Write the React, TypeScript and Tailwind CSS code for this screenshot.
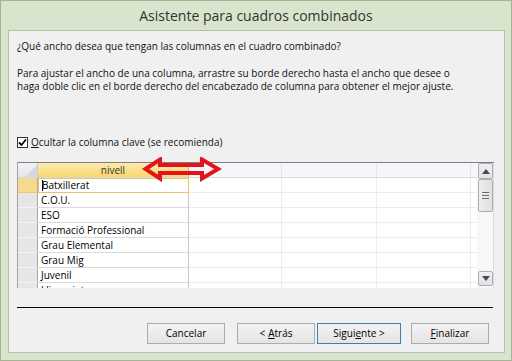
import React from "react";

const rows = [
  "Batxillerat",
  "C.O.U.",
  "ESO",
  "Formació Professional",
  "Grau Elemental",
  "Grau Mig",
  "Juvenil",
  "Llicenciatura",
];

function WizardButton({ children, focused }: { children: React.ReactNode; focused?: boolean }) {
  return (
    <button
      className={`h-[21px] flex items-center justify-center border bg-gradient-to-b from-[#f3f3f3] to-[#e4e4e4] text-[10px] text-black ${
        focused ? "w-[84px] border-[#3c7fb1]" : "w-[78px] border-[#acacac]"
      }`}
    >
      {children}
    </button>
  );
}

function ScrollButton({ up }: { up?: boolean }) {
  return (
    <div className="h-[15px] w-[15px] flex items-center justify-center border border-[#adadad] rounded-[2px] bg-gradient-to-b from-[#f0f0f0] to-[#e2e2e2]">
      <svg width="8" height="5" viewBox="0 0 8 5">
        {up ? <polygon points="0,5 4,0 8,5" fill="#3f4a63" /> : <polygon points="0,0 8,0 4,5" fill="#3f4a63" />}
      </svg>
    </div>
  );
}

export default function App() {
  return (
    <div className="w-[512px] h-[361px] flex flex-col bg-[#d9e4cc] border border-[#a3b394] font-['Open_Sans',sans-serif] overflow-hidden">
      <div className="h-[29px] flex items-center justify-center text-[14px] text-[#333]">
        Asistente para cuadros combinados
      </div>

      <div className="ml-[7px] w-[497px] h-[323px] border border-[#b3c1a5] bg-[#f0f0f0] px-[8px] pt-[9px] text-[10px] leading-[13px] text-[#111] flex flex-col">
        <p>¿Qué ancho desea que tengan las columnas en el cuadro combinado?</p>
        <p className="mt-[14px]">
          Para ajustar el ancho de una columna, arrastre su borde derecho hasta el ancho que desee o
          <br />
          haga doble clic en el borde derecho del encabezado de columna para obtener el mejor ajuste.
        </p>

        <label className="mt-[43px] h-[13px] flex items-center">
          <span className="w-[11px] h-[11px] border border-[#333] bg-white flex items-center justify-center">
            <svg width="9" height="9" viewBox="0 0 9 9">
              <path d="M1 4.5 L3.5 7 L8 1.5" fill="none" stroke="#000" strokeWidth="1.8" />
            </svg>
          </span>
          <span className="ml-[3px]">
            <span className="underline">O</span>cultar la columna clave (se recomienda)
          </span>
        </label>

        <div className="relative mt-[13px] w-[477px] h-[126px] flex border-t border-t-[#7f7f7f] border-l border-l-[#a5a5a5] bg-white">
          <div className="flex-1 flex flex-col overflow-hidden">
            <div className="h-[15px] shrink-0 flex border-b border-[#d6d9df]">
              <div className="w-[20px] border-r border-[#c9ccd2] bg-gradient-to-b from-[#f2f3f5] to-[#e4e6ea] flex items-end justify-end">
                <svg width="12" height="12" viewBox="0 0 12 12">
                  <polygon points="12,0 12,12 0,12" fill="#d4d7dc" />
                </svg>
              </div>
              <div className="w-[151px] border-r border-[#d7b95c] bg-gradient-to-b from-[#fdebaa] to-[#f8d66e] flex items-center justify-center text-[#333]">
                nivell
              </div>
              <div className="w-[93px] border-r border-[#e3e6ec] bg-[#f4f6fa]" />
              <div className="w-[95px] border-r border-[#e3e6ec] bg-[#f4f6fa]" />
              <div className="w-[94px] border-r border-[#e3e6ec] bg-[#f4f6fa]" />
              <div className="flex-1 bg-[#f4f6fa]" />
            </div>

            {rows.map((r, i) => (
              <div key={r} className="h-[15px] shrink-0 flex">
                <div
                  className={`w-[20px] border-r border-[#a9a9a9] border-b ${
                    i === 0 ? "bg-[#f7d98e] border-b-[#f0c870]" : "bg-[#e6e6e6] border-b-[#f4f4f4]"
                  }`}
                />
                <div
                  className={`w-[151px] flex items-center pl-[3px] text-black whitespace-nowrap ${
                    i === 0
                      ? "border border-[#e6c46a] bg-white"
                      : "border-r border-r-[#c6c6c6] border-b border-b-[#d9d9d9]"
                  }`}
                >
                  {i === 0 && <span className="inline-block w-px h-[11px] bg-black -mr-px" />}
                  {r}
                </div>
                <div className="w-[93px] border-r border-b border-[#ececec]" />
                <div className="w-[95px] border-r border-b border-[#ececec]" />
                <div className="w-[94px] border-r border-b border-[#ececec]" />
                <div className="flex-1 border-b border-[#ececec]" />
              </div>
            ))}
          </div>

          <div className="w-[17px] flex flex-col pl-px pb-[2px] bg-[#f7f7f7] border-r border-[#dcdcdc]">
            <div className="h-[16px] w-[15px] flex items-center justify-center border border-[#adadad] rounded-[2px] bg-gradient-to-b from-[#f0f0f0] to-[#e2e2e2]">
              <svg width="8" height="5" viewBox="0 0 8 5">
                <polygon points="0,5 4,0 8,5" fill="#3f4a63" />
              </svg>
            </div>
            <div className="h-[33px] w-[15px] flex flex-col items-center justify-center gap-[2px] border border-[#adadad] rounded-[2px] bg-gradient-to-r from-[#ededed] to-[#e0e0e0]">
              <span className="w-[7px] h-px bg-[#6b6b6b]" />
              <span className="w-[7px] h-px bg-[#6b6b6b]" />
              <span className="w-[7px] h-px bg-[#6b6b6b]" />
            </div>
            <div className="flex-1" />
            <ScrollButton />
          </div>

          <svg
            className="absolute left-[124px] top-[-6px]"
            width="80"
            height="26"
            viewBox="0 0 80 26"
          >
            <polygon
              points="3.5,12 18,2.5 18,8 60,8 60,2.5 76,12 60,21.5 60,16 18,16 18,21.5"
              fill="none"
              stroke="#e3141b"
              strokeWidth="4"
              strokeLinejoin="miter"
            />
          </svg>
        </div>

        <div className="mt-[19px] w-[476px] h-px bg-black" />

        <div className="mt-[15px] flex">
          <div className="ml-[130px]">
            <WizardButton>Cancelar</WizardButton>
          </div>
          <div className="ml-[12px]">
            <WizardButton>
              &lt; <span className="underline ml-[3px]">A</span>trás
            </WizardButton>
          </div>
          <div className="ml-[2px]">
            <WizardButton focused>
              Sigui<span className="underline">e</span>nte &gt;
            </WizardButton>
          </div>
          <div className="ml-[10px]">
            <WizardButton>
              <span className="underline">F</span>inalizar
            </WizardButton>
          </div>
        </div>
      </div>
    </div>
  );
}
